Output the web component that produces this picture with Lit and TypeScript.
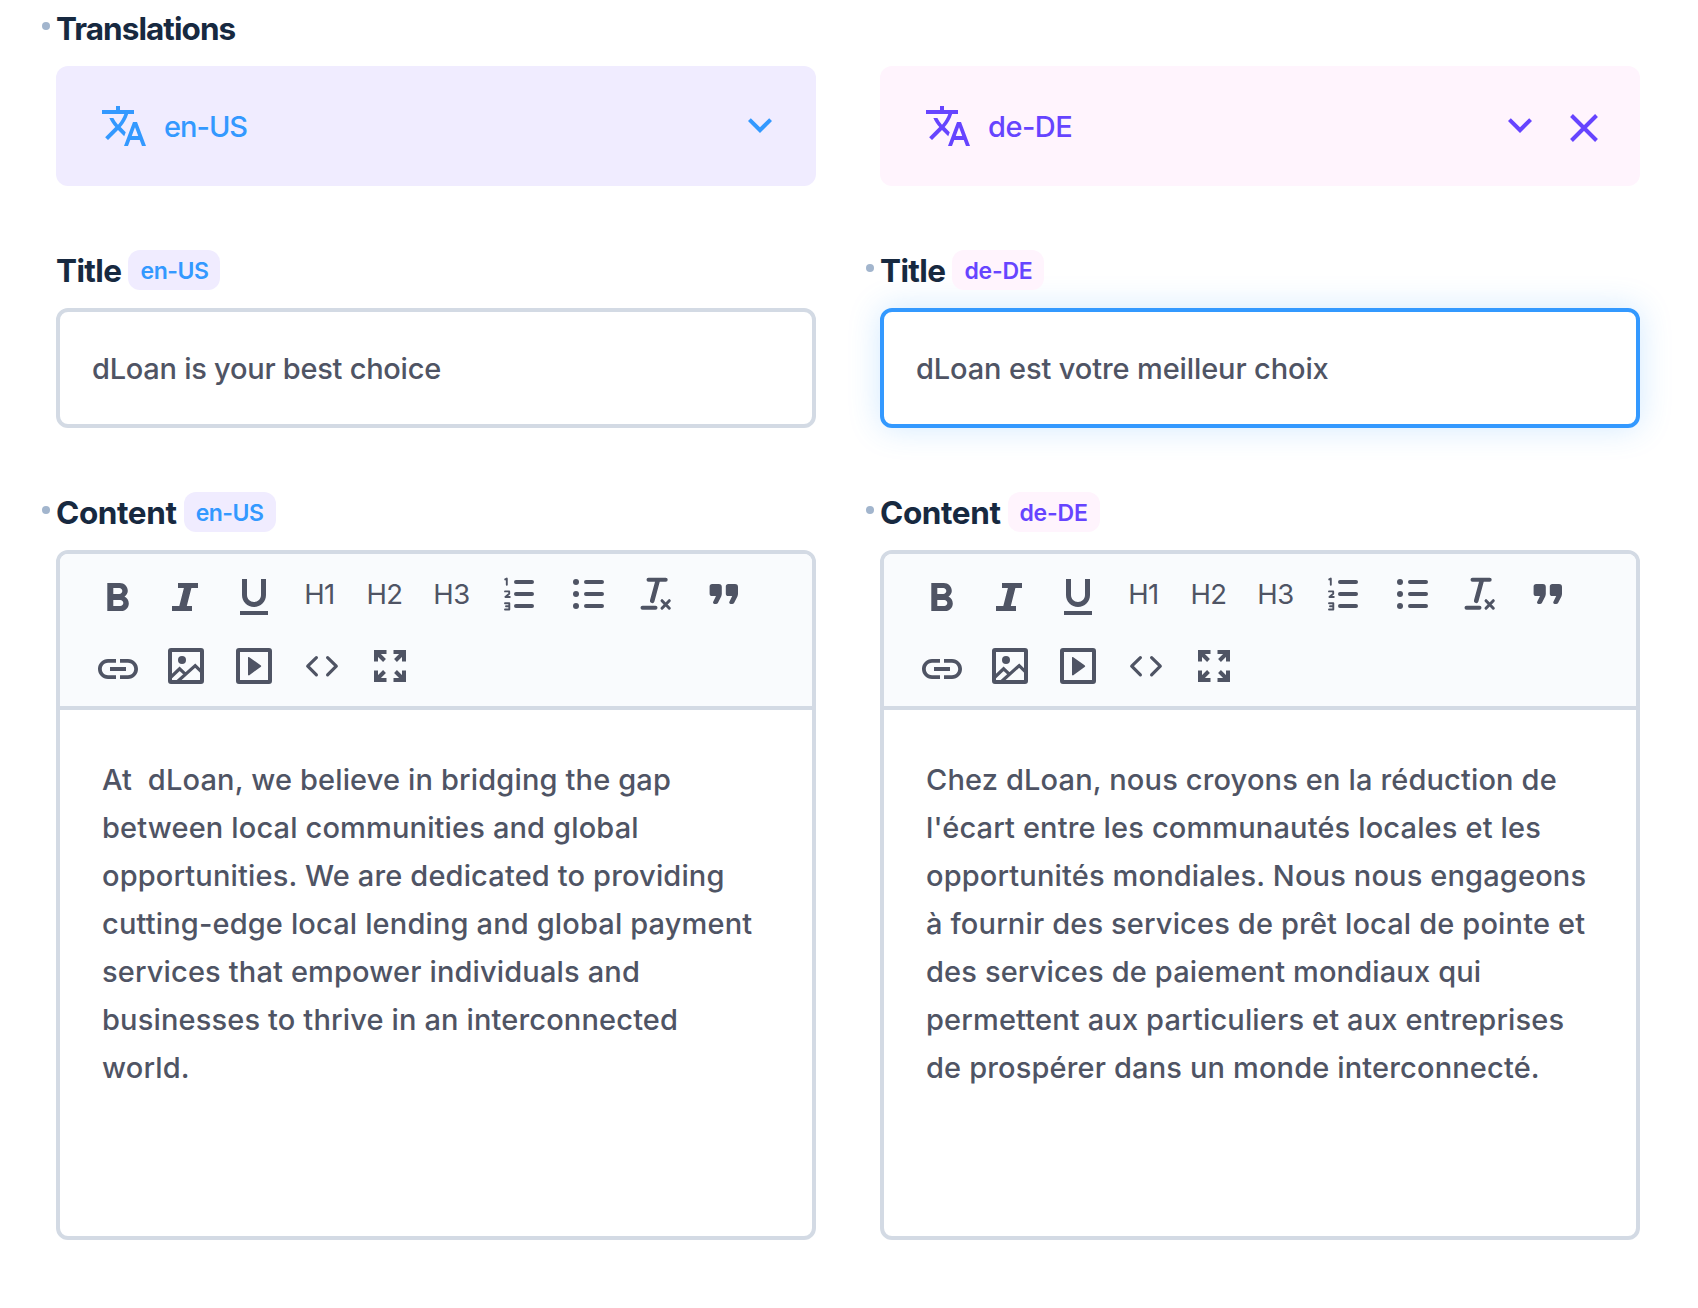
import { LitElement, html, svg, css, nothing, TemplateResult } from "lit";
import { customElement, property } from "lit/decorators.js";
import { classMap } from "lit/directives/class-map.js";

type Locale = "en-US" | "de-DE";

interface Entry {
  locale: Locale;
  header?: string;
  removable: boolean;
  titleChanged: boolean;
  focused: boolean;
  title: string;
  content: string[];
}

const entries: Entry[] = [
  {
    locale: "en-US",
    header: "Translations",
    removable: false,
    titleChanged: false,
    focused: false,
    title: "dLoan is your best choice",
    content: [
      "At \u00a0dLoan, we believe in bridging the gap",
      "between local communities and global",
      "opportunities. We are dedicated to providing",
      "cutting-edge local lending and global payment",
      "services that empower individuals and",
      "businesses to thrive in an interconnected",
      "world.",
    ],
  },
  {
    locale: "de-DE",
    removable: true,
    titleChanged: true,
    focused: true,
    title: "dLoan est votre meilleur choix",
    content: [
      "Chez dLoan, nous croyons en la réduction de",
      "l'écart entre les communautés locales et les",
      "opportunités mondiales. Nous nous engageons",
      "à fournir des services de prêt local de pointe et",
      "des services de paiement mondiaux qui",
      "permettent aux particuliers et aux entreprises",
      "de prospérer dans un monde interconnecté.",
    ],
  },
];

const tools: { icon?: TemplateResult; text?: string; w?: number }[] = [
  {
    icon: svg`<path transform="translate(9.3 17) scale(2)" d="M15.6 10.79c.97-.67 1.65-1.77 1.65-2.79 0-2.26-1.75-4-4-4H7v14h7.04c2.09 0 3.71-1.7 3.71-3.79 0-1.52-.86-2.82-2.15-3.42zM10 6.5h3c.83 0 1.5.67 1.5 1.5s-.67 1.5-1.5 1.5h-3v-3zm3.5 9H10v-3h3.5c.83 0 1.5.67 1.5 1.5s-.67 1.5-1.5 1.5z"/>`,
  },
  { icon: svg`<path d="M26 25h20v5h-6.6l-4.6 18H40v5H20v-5h7.3l4.6-18H26z"/>` },
  {
    icon: svg`<path transform="translate(10 15) scale(2)" d="M12 17c3.31 0 6-2.69 6-6V3h-2.5v8c0 1.93-1.57 3.5-3.5 3.5S8.5 12.93 8.5 11V3H6v8c0 3.31 2.69 6 6 6zm-7 2v2h14v-2H5z"/>`,
  },
  { text: "H1", w: 63 },
  { text: "H2", w: 67 },
  { text: "H3", w: 67 },
  {
    icon: svg`<g class="line"><path stroke-width="4" d="M31 24H47M31 36H47M31 48H47"/>
      <path stroke-width="1.9" d="M20.2 21.4l1.6-.8v6.2M20 33.4h4.2v2.3l-3.8 3.3h4.4M20 45.2h4.3v6.3H20M21 48.3h3"/></g>`,
  },
  {
    icon: svg`<g class="line"><path stroke-width="4" d="M33 24H49M33 36H49M33 48H49"/></g>
      <circle cx="23" cy="24" r="3"/><circle cx="23" cy="36" r="3"/><circle cx="23" cy="48" r="3"/>`,
  },
  {
    icon: svg`<g class="line"><path stroke-width="4" d="M27.5 21.8H44.7M21.5 49.8H34.5"/>
      <path stroke-width="4.6" d="M36.6 23L31.2 42.8"/>
      <path stroke-width="3" d="M41 42.7L48.3 50.2M48.3 42.7L41 50.2"/></g>`,
  },
  {
    icon: svg`<path d="M23.2 26h6.6a3 3 0 0 1 3 3v6.8q0 1.4-.6 2.6l-3.2 6.3a2.4 2.4 0 0 1-2.2 1.3h-1.2a1.5 1.5 0 0 1-1.4-2.2L27 38h-3.8a2.6 2.6 0 0 1-2.6-2.6v-6.8A2.6 2.6 0 0 1 23.2 26z"/>
      <path transform="translate(16.2)" d="M23.2 26h6.6a3 3 0 0 1 3 3v6.8q0 1.4-.6 2.6l-3.2 6.3a2.4 2.4 0 0 1-2.2 1.3h-1.2a1.5 1.5 0 0 1-1.4-2.2L27 38h-3.8a2.6 2.6 0 0 1-2.6-2.6v-6.8A2.6 2.6 0 0 1 23.2 26z"/>`,
  },
  {
    icon: svg`<path transform="translate(10 15) scale(2)" d="M3.9 12c0-1.71 1.39-3.1 3.1-3.1h4V7H7c-2.76 0-5 2.24-5 5s2.24 5 5 5h4v-1.9H7c-1.71 0-3.1-1.39-3.1-3.1zM8 13h8v-2H8v2zm9-6h-4v1.9h4c1.71 0 3.1 1.39 3.1 3.1s-1.39 3.1-3.1 3.1h-4V17h4c2.76 0 5-2.24 5-5s-2.24-5-5-5z"/>`,
  },
  {
    icon: svg`<rect class="line" x="18" y="20" width="32" height="32" rx="1" stroke-width="4"/>
      <circle cx="30" cy="30" r="4"/>
      <path class="line flat" stroke-width="3.2" d="M19 47L27.6 38.8L32.5 43.4M25.5 51.5L43.2 35.6L50 42.4"/>`,
  },
  {
    icon: svg`<rect class="line" x="18" y="20" width="32" height="32" rx="1" stroke-width="4"/>
      <path d="M28 27.8v16.8a.8.8 0 0 0 1.3.6L40.6 37a1.1 1.1 0 0 0 0-1.8L29.3 27.2a.8.8 0 0 0-1.3.6z"/>`,
  },
  {
    icon: svg`<path class="line" stroke-width="3.2" d="M28.4 27.6L19.7 36.2L28.4 44.8M39.6 27.6L48.3 36.2L39.6 44.8"/>`,
  },
  {
    icon: svg`<g class="line flat" stroke-width="4">
      <path d="M20 31.5V22H30.5M21 23L28.5 30.5"/><path d="M48 31.5V22H37.5M47 23L39.5 30.5"/>
      <path d="M20 40.5V50H30.5M21 49L28.5 41.5"/><path d="M48 40.5V50H37.5M47 49L39.5 41.5"/></g>`,
  },
];

@customElement("field-label")
class FieldLabel extends LitElement {
  static styles = css`
    :host { display: block; }
    .row { position: relative; display: flex; align-items: center; gap: 7px; height: 40px; margin-bottom: 18px; }
    .dot { position: absolute; left: -14px; top: 14px; width: 8px; height: 8px; border-radius: 50%; background: #a2b5cd; }
    .name { font-size: 31.5px; font-weight: 700; line-height: 40px; color: #172940; letter-spacing: -0.4px; padding-top: 1px; }
    .name.Translations { letter-spacing: -0.95px; }
    .name.Title { letter-spacing: -0.6px; }
    .chip {
      display: flex; align-items: center; justify-content: center; width: 92px; height: 40px; box-sizing: border-box;
      padding-top: 2px; border-radius: 12px; font-size: 23px; font-weight: 600;
    }
    .chip.en-US { background: #f0ecff; color: #3399ff; letter-spacing: -0.5px; }
    .chip.de-DE { background: #fff4fd; color: #6644ff; letter-spacing: -0.2px; }
  `;
  @property() name = "";
  @property() locale = "";
  @property({ type: Boolean }) changed = false;

  render() {
    return html`<div class="row">
      ${this.changed ? html`<span class="dot"></span>` : nothing}
      <span class="name ${this.name}">${this.name}</span>
      ${this.locale ? html`<span class="chip ${this.locale}">${this.locale}</span>` : nothing}
    </div>`;
  }
}

@customElement("language-select")
class LanguageSelect extends LitElement {
  static styles = css`
    :host { display: block; }
    .bar {
      display: flex; align-items: center; height: 120px; box-sizing: border-box;
      padding: 0 32px 0 44px; border-radius: 12px;
    }
    .bar.en-US { background: #f0ecff; color: #3399ff; }
    .bar.de-DE { background: #fff4fd; color: #6644ff; }
    .name { flex: 1; margin-left: 16px; font-size: 29px; font-weight: 500; line-height: 40px; padding-top: 1px; letter-spacing: -1px; }
    .de-DE .name { letter-spacing: -0.5px; }
    svg { width: 48px; height: 48px; fill: currentColor; flex: none; }
    .close { margin-left: 16px; margin-top: 4px; fill: none; stroke: currentColor; stroke-width: 4; }
    .chev { margin-top: -2px; }
  `;
  @property() locale = "";
  @property({ type: Boolean }) removable = false;

  render() {
    return html`<div class="bar ${this.locale}">
      <svg viewBox="0 0 24 24"><path d="M12.87 15.07l-2.54-2.51.03-.03c1.74-1.94 2.98-4.17 3.71-6.53H17V4h-7V2H8v2H1v1.99h11.17C11.5 7.92 10.44 9.75 9 11.35 8.07 10.32 7.3 9.19 6.69 8h-2c.73 1.63 1.73 3.17 2.98 4.56l-5.09 5.02L4 19l5-5 3.11 3.11.76-2.04zM18.5 10h-2L12 22h2l1.12-3h4.75L21 22h2l-4.5-12zm-2.62 7l1.62-4.33L19.12 17h-3.24z"/></svg>
      <span class="name">${this.locale}</span>
      <svg class="chev" viewBox="0 0 24 24"><path d="M16.59 8.59L12 13.17 7.41 8.59 6 10l6 6 6-6z"/></svg>
      ${this.removable
        ? html`<svg class="close" viewBox="0 0 48 48"><path d="M11.5 11.5L36.5 36.5M36.5 11.5L11.5 36.5"/></svg>`
        : nothing}
    </div>`;
  }
}

@customElement("rich-editor")
class RichEditor extends LitElement {
  static styles = css`
    :host { display: block; }
    .box { box-sizing: border-box; height: 690px; border: 4px solid #d3dae4; border-radius: 12px; overflow: hidden; background: #fff; }
    .toolbar {
      display: flex; flex-wrap: wrap; padding: 4px 24px; background: #f9fbfd; border-bottom: 4px solid #d3dae4;
      color: #4f5464;
    }
    .cell { width: 68px; height: 72px; flex: none; display: flex; align-items: center; justify-content: center; font-size: 27.5px; letter-spacing: -0.5px; }
    .cell svg { width: 68px; height: 72px; fill: currentColor; }
    .line { fill: none; stroke: currentColor; stroke-linecap: round; stroke-linejoin: round; }
    .flat { stroke-linecap: butt; stroke-linejoin: miter; }
    .text { margin: 0; padding: 46px 42px 0; font-size: 29px; font-weight: 500; line-height: 48px; letter-spacing: 0.15px; color: #4f5464; white-space: pre-line; }
  `;
  @property({ attribute: false }) lines: string[] = [];

  render() {
    return html`<div class="box">
      <div class="toolbar">
        ${tools.map(
          (t) => html`<span class="cell" style="width:${t.w ?? 68}px">${t.text ??
          html`<svg viewBox="0 0 68 72">${t.icon}</svg>`}</span>`
        )}
      </div>
      <p class="text">${this.lines.join("\n")}</p>
    </div>`;
  }
}

@customElement("app-root")
class AppRoot extends LitElement {
  static styles = css`
    :host { display: block; font-family: Inter, "Liberation Sans", sans-serif; background: #fff; }
    .page {
      display: grid; grid-template-columns: 760px 760px; column-gap: 64px; align-items: end;
      box-sizing: border-box; height: 1308px; padding: 8px 58px 0 56px; align-content: start;
    }
    .entry { display: flex; flex-direction: column; gap: 64px; }
    .input {
      display: flex; align-items: center; box-sizing: border-box; height: 120px; padding: 0 32px;
      border: 4px solid #d3dae4; border-radius: 12px; background: #fff;
      font-size: 29px; font-weight: 500; letter-spacing: -0.26px; color: #4f5464;
    }
    .input.focused { border-color: #3399ff; box-shadow: 0 0 32px rgba(51, 153, 255, 0.22); letter-spacing: -0.12px; }
  `;

  render() {
    return html`<main class="page">
      ${entries.map(
        (e) => html`<section class="entry">
          <div>
            ${e.header ? html`<field-label name=${e.header} changed></field-label>` : nothing}
            <language-select locale=${e.locale} ?removable=${e.removable}></language-select>
          </div>
          <div>
            <field-label name="Title" locale=${e.locale} ?changed=${e.titleChanged}></field-label>
            <div class=${classMap({ input: true, focused: e.focused })}>${e.title}</div>
          </div>
          <div>
            <field-label name="Content" locale=${e.locale} changed></field-label>
            <rich-editor .lines=${e.content}></rich-editor>
          </div>
        </section>`
      )}
    </main>`;
  }
}
